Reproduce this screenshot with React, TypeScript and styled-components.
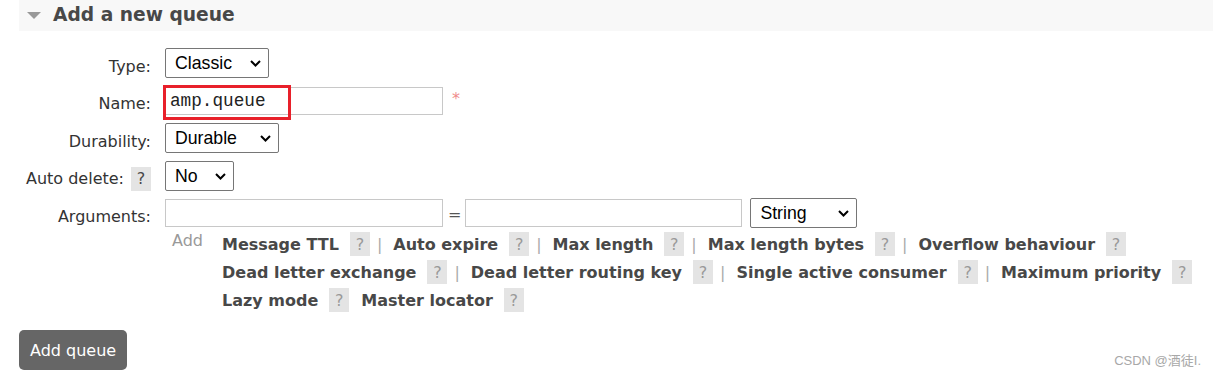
import React from "react";
import styled, { createGlobalStyle } from "styled-components";

const Global = createGlobalStyle`
  html, body { margin: 0; padding: 0; background: #fff; }
  body { font-family: "DejaVu Sans", Verdana, sans-serif; color: #333; }
`;

const Page = styled.div`
  position: relative;
  width: 1213px;
  height: 381px;
  padding-left: 19px;
  box-sizing: border-box;
  overflow: hidden;
`;

const SectionHeader = styled.div`
  display: flex;
  align-items: center;
  height: 31px;
  background: #f8f8f8;
  padding-left: 8px;
  gap: 12px;
`;

const Triangle = styled.span`
  width: 0;
  height: 0;
  border-left: 7px solid transparent;
  border-right: 7px solid transparent;
  border-top: 7px solid #999;
  margin-top: -1px;
`;

const Title = styled.h2`
  margin: 0;
  font-size: 18.67px;
  font-weight: bold;
  color: #484848;
  line-height: 1;
`;

const Form = styled.div`
  display: flex;
  flex-direction: column;
  gap: 7.5px;
  margin-top: 17px;
`;

const Row = styled.div`
  display: flex;
  align-items: center;
  height: 30px;
`;

const Label = styled.label`
  width: 132px;
  margin-right: 14px;
  display: flex;
  justify-content: flex-end;
  align-items: center;
  gap: 7px;
  padding-top: 6px;
  font-size: 16px;
  color: #333;
  white-space: nowrap;
`;

const SelectWrap = styled.span<{ $w: number }>`
  position: relative;
  display: inline-block;
  width: ${(p) => p.$w}px;
  height: 30px;
`;

const Select = styled.select`
  appearance: none;
  -webkit-appearance: none;
  width: 100%;
  height: 100%;
  box-sizing: border-box;
  border: 1px solid #767676;
  border-radius: 2px;
  background: #fff;
  padding: 0 0 0 9px;
  font-family: "Liberation Sans", Arial, sans-serif;
  font-size: 17.7px;
  color: #000;
  outline: none;
`;

const Chevron = styled.svg`
  position: absolute;
  right: 8px;
  top: 12px;
  pointer-events: none;
`;

const TextInput = styled.input<{ $w: number }>`
  width: ${(p) => p.$w}px;
  height: 28px;
  box-sizing: border-box;
  border: 1px solid #c8c8c8;
  padding: 0 4px;
  font-family: "Liberation Mono", "Courier New", monospace;
  font-size: 17.7px;
  color: #222;
  outline: none;
  background: #fff;
`;

const FieldWrap = styled.span`
  position: relative;
  display: inline-flex;
`;

const Highlight = styled.span`
  position: absolute;
  left: -2px;
  top: -2px;
  width: 128px;
  height: 35px;
  border: 3px solid #e8202a;
  box-sizing: border-box;
  pointer-events: none;
`;

const Required = styled.span`
  margin-left: 9px;
  margin-top: -5px;
  color: #f08c8c;
  font-size: 16px;
`;

const Equals = styled.span`
  margin: 0 4px 0 5px;
  font-size: 16px;
  color: #555;
  padding-top: 2px;
`;

const Help = styled.span<{ $dark?: boolean }>`
  display: inline-flex;
  align-items: center;
  justify-content: center;
  width: 20px;
  height: 24px;
  background: #e4e4e4;
  color: ${(p) => (p.$dark ? "#484848" : "#999")};
  font-size: 16px;
  font-weight: normal;
`;

const Options = styled.div`
  display: flex;
  margin-top: 2px;
  padding-left: 153px;
`;

const AddText = styled.span`
  width: 50px;
  font-size: 16px;
  color: #999;
  line-height: 22px;
`;

const Lines = styled.div`
  display: flex;
  flex-direction: column;
`;

const Line = styled.div`
  display: flex;
  align-items: center;
  height: 28px;
  white-space: nowrap;
`;

const OptName = styled.span`
  font-size: 16px;
  font-weight: bold;
  color: #484848;
  margin-right: 11px;
`;

const Sep = styled.span`
  margin: 0 11px 0 7px;
  color: #aaa;
  font-size: 16px;
`;

const Gap = styled.span<{ $w?: number }>`
  width: ${(p) => p.$w ?? 12}px;
`;

const Button = styled.button`
  margin-top: 16px;
  height: 40px;
  padding: 0 11px;
  border: none;
  border-radius: 5px;
  background: #666;
  color: #fff;
  font-family: "DejaVu Sans", Verdana, sans-serif;
  font-size: 16px;
`;

const Watermark = styled.span`
  position: absolute;
  right: 12px;
  bottom: 12px;
  font-family: "Liberation Sans", Arial, "Noto Sans CJK SC", sans-serif;
  font-size: 13px;
  color: #a8a8a8;
`;

const ChevronIcon = () => (
  <Chevron width="11" height="7" viewBox="0 0 11 7">
    <path d="M1 1 L5.5 5.5 L10 1" fill="none" stroke="#000" strokeWidth="2" />
  </Chevron>
);

const Dropdown = ({ w, value, options }: { w: number; value: string; options: string[] }) => (
  <SelectWrap $w={w}>
    <Select defaultValue={value}>
      {options.map((o) => (
        <option key={o}>{o}</option>
      ))}
    </Select>
    <ChevronIcon />
  </SelectWrap>
);

const lines: string[][] = [
  ["Message TTL", "Auto expire", "Max length", "Max length bytes", "Overflow behaviour"],
  ["Dead letter exchange", "Dead letter routing key", "Single active consumer", "Maximum priority"],
];

export default function App() {
  return (
    <>
      <Global />
      <Page>
        <SectionHeader>
          <Triangle />
          <Title>Add a new queue</Title>
        </SectionHeader>
        <Form>
          <Row>
            <Label>Type:</Label>
            <Dropdown w={104} value="Classic" options={["Classic", "Quorum", "Stream"]} />
          </Row>
          <Row>
            <Label>Name:</Label>
            <FieldWrap>
              <TextInput $w={278} defaultValue="amp.queue" />
              <Highlight />
            </FieldWrap>
            <Required>*</Required>
          </Row>
          <Row>
            <Label>Durability:</Label>
            <Dropdown w={114} value="Durable" options={["Durable", "Transient"]} />
          </Row>
          <Row>
            <Label>
              Auto delete:<Help $dark>?</Help>
            </Label>
            <Dropdown w={69} value="No" options={["No", "Yes"]} />
          </Row>
          <Row>
            <Label>Arguments:</Label>
            <TextInput $w={278} />
            <Equals>=</Equals>
            <TextInput $w={277} />
            <Gap $w={8} />
            <Dropdown w={107} value="String" options={["String", "Number", "Boolean", "List"]} />
          </Row>
        </Form>
        <Options>
          <AddText>Add</AddText>
          <Lines>
            {lines.map((l, i) => (
              <Line key={i}>
                {l.map((name, j) => (
                  <React.Fragment key={name}>
                    <OptName>{name}</OptName>
                    <Help>?</Help>
                    {j < l.length - 1 && <Sep>|</Sep>}
                  </React.Fragment>
                ))}
              </Line>
            ))}
            <Line>
              <OptName>Lazy mode</OptName>
              <Help>?</Help>
              <Gap />
              <OptName>Master locator</OptName>
              <Help>?</Help>
            </Line>
          </Lines>
        </Options>
        <Button>Add queue</Button>
        <Watermark>CSDN @酒徒I.</Watermark>
      </Page>
    </>
  );
}
